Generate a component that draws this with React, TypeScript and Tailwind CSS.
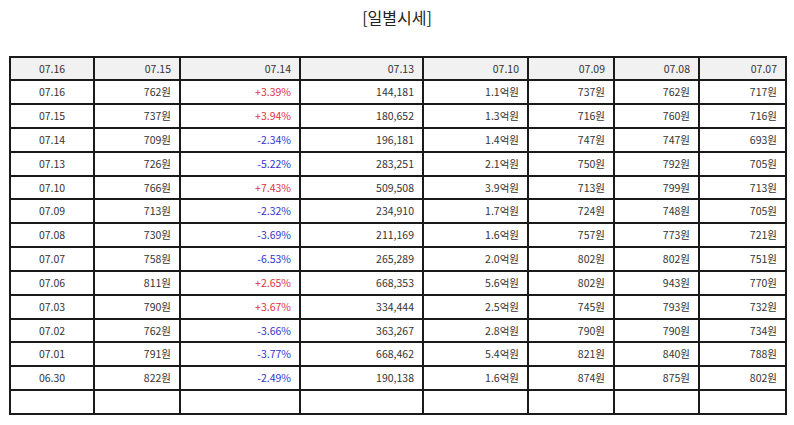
import React from "react";

const header = ["07.16", "07.15", "07.14", "07.13", "07.10", "07.09", "07.08", "07.07"];
const rows: string[][] = [
  ["07.16", "762원", "+3.39%", "144,181", "1.1억원", "737원", "762원", "717원"],
  ["07.15", "737원", "+3.94%", "180,652", "1.3억원", "716원", "760원", "716원"],
  ["07.14", "709원", "-2.34%", "196,181", "1.4억원", "747원", "747원", "693원"],
  ["07.13", "726원", "-5.22%", "283,251", "2.1억원", "750원", "792원", "705원"],
  ["07.10", "766원", "+7.43%", "509,508", "3.9억원", "713원", "799원", "713원"],
  ["07.09", "713원", "-2.32%", "234,910", "1.7억원", "724원", "748원", "705원"],
  ["07.08", "730원", "-3.69%", "211,169", "1.6억원", "757원", "773원", "721원"],
  ["07.07", "758원", "-6.53%", "265,289", "2.0억원", "802원", "802원", "751원"],
  ["07.06", "811원", "+2.65%", "668,353", "5.6억원", "802원", "943원", "770원"],
  ["07.03", "790원", "+3.67%", "334,444", "2.5억원", "745원", "793원", "732원"],
  ["07.02", "762원", "-3.66%", "363,267", "2.8억원", "790원", "790원", "734원"],
  ["07.01", "791원", "-3.77%", "668,462", "5.4억원", "821원", "840원", "788원"],
  ["06.30", "822원", "-2.49%", "190,138", "1.6억원", "874원", "875원", "802원"],
  ["", "", "", "", "", "", "", ""],
];

function Cell({ text, col, extra }: { text: string; col: number; extra?: string }) {
  let color = "";
  if (col === 2 && text.startsWith("+")) color = "text-[#e0303e]";
  else if (col === 2 && text.startsWith("-")) color = "text-[#3333cc]";
  return (
    <div
      className={`flex items-center border-r-2 border-b-2 border-[#1a1a1a] ${
        col === 0 ? "justify-center" : "justify-end pr-[8px]"
      } ${color} ${extra ?? ""}`}
    >
      {text}
    </div>
  );
}

export default function App() {
  return (
    <div
      className="w-[794px] h-[425px] bg-white text-[#333]"
      style={{ fontFamily: '"Noto Sans CJK KR", "Noto Sans", sans-serif' }}
    >
      <div className="pt-[5px] h-[56px] text-center text-[16px] leading-[24px] text-[#222]">[일별시세]</div>
      <div className="ml-[9px] w-[778px] border-l-2 border-t-2 border-[#1a1a1a] text-[10.5px] grid grid-cols-[84px_86px_120px_123px_105px_86px_85px_87px] grid-rows-[23px_24px_24px_24px_24px_23px_24px_24px_24px_24px_24px_23px_24px_24px_24px]">
        {header.map((h, i) => (
          <Cell key={`h${i}`} text={h} col={i === 0 ? 0 : 1} extra="bg-[#f1f1f1]" />
        ))}
        {rows.map((r, ri) =>
          r.map((c, ci) => <Cell key={`${ri}-${ci}`} text={c} col={ci} />)
        )}
      </div>
    </div>
  );
}
